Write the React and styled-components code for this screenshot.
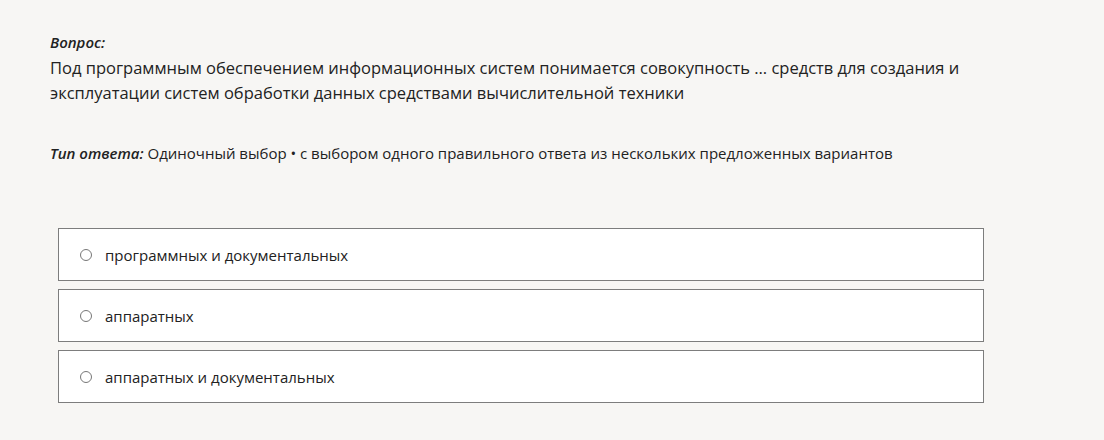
import React from "react";
import styled, { createGlobalStyle } from "styled-components";

const GlobalStyle = createGlobalStyle`
  html, body {
    margin: 0;
    padding: 0;
    background: #f7f6f4;
  }
  body {
    font-family: "Open Sans", "Noto Sans", sans-serif;
    color: #222;
  }
`;

const Page = styled.div`
  width: 1104px;
  height: 440px;
  padding: 30px 0 0 50px;
  box-sizing: border-box;
`;

const Question = styled.div`
  font-size: 16.5px;
  line-height: 25px;
  width: 1000px;
`;

const Label = styled.div`
  font-size: 15px;
  font-weight: 600;
  font-style: italic;
`;

const AnswerType = styled.div`
  margin-top: 36px;
  font-size: 15px;
  line-height: 24px;

  b {
    font-weight: 600;
    font-style: italic;
  }
`;

const Options = styled.div`
  display: flex;
  flex-direction: column;
  gap: 8px;
  margin: 63px 0 0 8px;
  width: 926px;
`;

const Option = styled.label`
  display: flex;
  align-items: center;
  gap: 13px;
  height: 53px;
  box-sizing: border-box;
  padding: 0 21px;
  background: #fff;
  border: 1px solid #7d7d7d;
  font-size: 15px;
  cursor: pointer;
`;

const Radio = styled.span`
  width: 12px;
  height: 12px;
  box-sizing: border-box;
  border-radius: 50%;
  border: 1px solid #777;
  background: #fff;
  flex-shrink: 0;
`;

const options = [
  "программных и документальных",
  "аппаратных",
  "аппаратных и документальных",
];

export default function App() {
  return (
    <>
      <GlobalStyle />
      <Page>
        <Question>
          <Label>Вопрос:</Label>
          Под программным обеспечением информационных систем понимается совокупность … средств для создания и
          <br />
          эксплуатации систем обработки данных средствами вычислительной техники
        </Question>
        <AnswerType>
          <b>Тип ответа:</b> Одиночный выбор • с выбором одного правильного ответа из нескольких предложенных вариантов
        </AnswerType>
        <Options>
          {options.map((o) => (
            <Option key={o}>
              <Radio />
              {o}
            </Option>
          ))}
        </Options>
      </Page>
    </>
  );
}
